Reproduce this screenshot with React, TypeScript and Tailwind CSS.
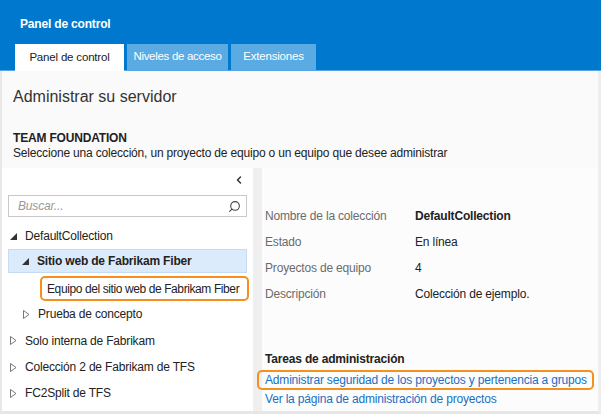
import { Search, ChevronLeft } from "lucide-react";

function Expanded() {
  return (
    <svg width="7" height="7" viewBox="0 0 7 7" className="shrink-0">
      <path d="M7 0 L7 7 L0 7 Z" fill="#333" />
    </svg>
  );
}

function Collapsed() {
  return (
    <svg width="7" height="9" viewBox="0 0 7 9" className="shrink-0">
      <path d="M0.5 0.5 L6 4.5 L0.5 8.5 Z" fill="none" stroke="#777" strokeWidth="1" />
    </svg>
  );
}

const props = [
  { label: "Nombre de la colección", value: "DefaultCollection", bold: true },
  { label: "Estado", value: "En línea" },
  { label: "Proyectos de equipo", value: "4" },
  { label: "Descripción", value: "Colección de ejemplo." },
];

export default function App() {
  return (
    <div className="w-[601px] h-[414px] overflow-hidden bg-[#fafafa] text-[12px] tracking-[-0.18px] text-[#222] font-['Segoe_UI','Liberation_Sans',sans-serif] flex flex-col">
      <header className="h-[71px] bg-[#0078cd] border-b border-[#55a6e3] flex flex-col shrink-0">
        <div className="pl-[20px] pt-[15px] h-[44px] font-bold text-white">Panel de control</div>
        <nav className="flex items-end gap-[3px] pl-[15px] h-[26px] text-[11.5px]">
          <div className="w-[109px] h-[27px] -mb-px bg-white text-[#222] flex items-center justify-center">Panel de control</div>
          <div className="w-[101px] h-[26px] bg-[#5aaae4] text-white flex items-center justify-center whitespace-nowrap tracking-[-0.3px]">Niveles de acceso</div>
          <div className="w-[85px] h-[26px] bg-[#5aaae4] text-white flex items-center justify-center">Extensiones</div>
        </nav>
      </header>

      <div className="flex-1 flex flex-col border-l-2 border-l-[#e8e8e8] border-r-[3px] border-r-[#eeeeee] border-b-[3px] border-b-[#e6e6e6] min-h-0">
        <h1 className="pl-[11px] pt-[14px] h-[48px] text-[16px] font-light text-[#333] tracking-normal">Administrar su servidor</h1>
        <div className="pl-[11px] h-[49px] pt-[11px]">
          <div className="font-bold text-[#222] leading-[16px]">TEAM FOUNDATION</div>
          <div className="leading-[15px]">Seleccione una colección, un proyecto de equipo o un equipo que desee administrar</div>
        </div>

        <div className="flex-1 flex min-h-0">
          <aside className="w-[251px] shrink-0 bg-white flex flex-col pt-[2px]">
            <div className="flex justify-end pr-[8px] h-[20px] items-center">
              <ChevronLeft size={12} strokeWidth={3} className="text-[#333]" />
            </div>
            <div className="mx-[6px] mt-[5px] h-[22px] border border-[#c8c8c8] flex items-center justify-between pl-[9px] pr-[5px]">
              <span className="italic text-[#999]">Buscar...</span>
              <Search size={13} className="text-[#444] -scale-x-100" />
            </div>
            <ul className="mt-[6px] flex flex-col">
              <li className="h-[26px] flex items-center gap-[8px] pl-[8px]">
                <Expanded />
                <span>DefaultCollection</span>
              </li>
              <li className="mx-[6px] h-[24px] bg-[#dcebfb] border border-[#c7dcf3] flex items-center gap-[8px] pl-[13px]">
                <Expanded />
                <span className="font-bold">Sitio web de Fabrikam Fiber</span>
              </li>
              <li className="h-[28px] flex items-center pl-[38px] pr-[4px] pt-[3px]">
                <span className="h-[25px] w-full border-2 border-[#f5901e] rounded-[5px] flex items-center pl-[5px] whitespace-nowrap tracking-[-0.4px]">Equipo del sitio web de Fabrikam Fiber</span>
              </li>
              <li className="h-[26px] flex items-center gap-[8px] pl-[21px]">
                <Collapsed />
                <span>Prueba de concepto</span>
              </li>
              <li className="h-[27px] flex items-center gap-[8px] pl-[8px]">
                <Collapsed />
                <span>Solo interna de Fabrikam</span>
              </li>
              <li className="h-[26px] flex items-center gap-[8px] pl-[8px]">
                <Collapsed />
                <span>Colección 2 de Fabrikam de TFS</span>
              </li>
              <li className="h-[26px] flex items-center gap-[8px] pl-[8px]">
                <Collapsed />
                <span>FC2Split de TFS</span>
              </li>
            </ul>
          </aside>

          <div className="w-[9px] shrink-0 bg-[#efefef]" />

          <section className="flex-1 min-w-0 bg-[#fcfcfc] flex flex-col pt-[35px]">
            <dl className="flex flex-col">
              {props.map((p) => (
                <div key={p.label} className="h-[26px] flex items-center pl-[3px]">
                  <dt className="w-[150px] text-[#6b6b6b]">{p.label}</dt>
                  <dd className={p.bold ? "font-bold text-[#222]" : "text-[#222]"}>{p.value}</dd>
                </div>
              ))}
            </dl>
            <div className="mt-[43px] pl-[3px] font-semibold text-[#222]">Tareas de administración</div>
            <div className="mt-[2px] mr-[4px] -ml-[5px] h-[20px] border-2 border-[#f5901e] rounded-[5px] flex items-center pl-[6px] text-[#1a6fc4] whitespace-nowrap">
              Administrar seguridad de los proyectos y pertenencia a grupos
            </div>
            <div className="pl-[3px] text-[#1a6fc4]">Ver la página de administración de proyectos</div>
          </section>
        </div>
      </div>
    </div>
  );
}
